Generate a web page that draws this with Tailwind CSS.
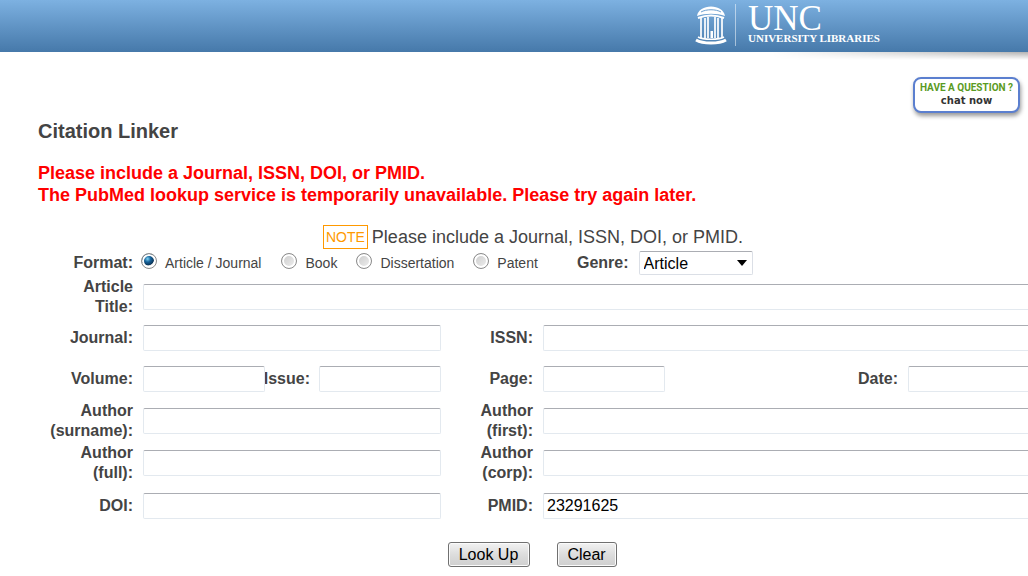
<!DOCTYPE html>
<html lang="en">
<head>
    <meta charset="UTF-8">
    <title>Citation Linker</title>
    <script src="https://cdn.jsdelivr.net/npm/@tailwindcss/browser@4"></script>
</head>
<body class="bg-white text-[#444444] font-['Liberation_Sans',Arial,sans-serif] overflow-x-hidden">
    <header class="h-13 bg-linear-to-b from-[#7db1e1] to-[#4679aa]">
        <a href="#" class="flex justify-end pr-36 pt-1 text-white">
            <svg class="w-8 h-10 mt-px mr-2" viewBox="0 0 32 40" fill="none" stroke="white">
                <path d="M2 11C3 5 9 1.500 16 1.500s13 3.500 14 9.500c-8-3-20-3-28 0z" fill="white" stroke="none"/>
                <path d="M6 7c5-3 15-3 20 0" stroke="#6c9fcf"/>
                <path d="M3 13c8-3 18-3 26 0" stroke-width="2"/>
                <path d="M6 13v20M10 13v20M13 12v21M20 12v21M23 13v20M27 13v20" stroke-width="1.700"/>
                <path d="M15.500 26h2.500v7h-2.500z" fill="white" stroke="none"/>
                <path d="M3 32c5 3 21 3 26 0" stroke-width="1.500"/>
                <path d="M1 35c7 4 23 4 30 0" stroke-width="3"/>
            </svg>
            <span class="border-l border-white/50 h-[42px] pl-3 w-[149px] font-['Liberation_Serif',serif]">
                <span class="block text-[35px] leading-[29px]">UNC</span>
                <span class="block text-[11px] leading-[10px] font-bold whitespace-nowrap">UNIVERSITY LIBRARIES</span>
            </span>
        </a>
    </header>
    <div class="h-2 ml-[75%] bg-linear-to-b from-black/30 to-transparent mask-l-from-0%"></div>

    <main class="pl-[38px]">
        <div class="flex justify-end pr-2 pt-[17px]">
            <button class="w-[107px] h-9 rounded-lg border-2 border-[#5b7fcf] bg-white shadow-[1px_3px_4px_rgba(0,0,0,0.4)] flex flex-col items-center justify-center whitespace-nowrap">
                <span class="text-[10px] leading-[12px] font-bold text-[#5a9a22] font-['Roboto',sans-serif]">HAVE A QUESTION ?</span>
                <span class="text-[10px] leading-[14px] font-bold text-[#333333] font-['DejaVu_Sans',sans-serif]">chat now</span>
            </button>
        </div>

        <h1 class="text-xl leading-6 font-bold mt-1.5">Citation Linker</h1>
        <p class="text-lg leading-[22px] font-bold text-[#ff0000] mt-[19px]">
            Please include a Journal, ISSN, DOI, or PMID.<br>
            The PubMed lookup service is temporarily unavailable. Please try again later.
        </p>

        <form class="mt-[19px]">
            <p class="flex justify-center items-center gap-1 text-lg leading-6">
                <span class="border border-[#ff9900] text-[#ff9900] text-sm leading-[22px] px-[2px]">NOTE</span>
                Please include a Journal, ISSN, DOI, or PMID.
            </p>

            <div class="flex items-center h-[27px]">
                <span class="w-[95px] shrink-0 text-right font-bold">Format:</span>
                <div class="flex ml-2 w-[428px] text-sm">
                    <label class="flex items-center gap-2 mr-5">
                        <input type="radio" name="format" checked class="appearance-none size-4 mb-1 rounded-full border border-[#8c8c8c] shadow-[inset_0_0_0_2px_white] bg-[#e4e4e4] checked:bg-[radial-gradient(circle_at_40%_35%,#7fd4f5_0,#17639b_25%,#0b3558_50%,#e8e8e8_56%)]">
                        Article / Journal
                    </label>
                    <label class="flex items-center gap-2 mr-[19px]">
                        <input type="radio" name="format" class="appearance-none size-4 mb-1 rounded-full border border-[#8c8c8c] shadow-[inset_0_0_0_2px_white] bg-linear-to-br from-[#c9c9c9] to-[#f2f2f2] checked:bg-[#17639b]">
                        Book
                    </label>
                    <label class="flex items-center gap-2 mr-[19px]">
                        <input type="radio" name="format" class="appearance-none size-4 mb-1 rounded-full border border-[#8c8c8c] shadow-[inset_0_0_0_2px_white] bg-linear-to-br from-[#c9c9c9] to-[#f2f2f2] checked:bg-[#17639b]">
                        Dissertation
                    </label>
                    <label class="flex items-center gap-2">
                        <input type="radio" name="format" class="appearance-none size-4 mb-1 rounded-full border border-[#8c8c8c] shadow-[inset_0_0_0_2px_white] bg-linear-to-br from-[#c9c9c9] to-[#f2f2f2] checked:bg-[#17639b]">
                        Patent
                    </label>
                </div>
                <label for="genre" class="font-bold ml-2">Genre:</label>
                <div class="relative ml-[10px]">
                    <select id="genre" class="appearance-none block w-[114px] h-6 pl-1 text-black bg-white border border-[#dbdfe6] border-t-[#abadb3] rounded-xs">
                        <option>Article</option>
                        <option>Journal</option>
                    </select>
                    <svg class="absolute right-[6px] top-[9px] w-[10px] h-[6px] pointer-events-none" viewBox="0 0 10 6"><path d="M0 0h10L5 6z"/></svg>
                </div>
            </div>

            <div class="flex items-center h-[41px]">
                <label for="title" class="w-[95px] shrink-0 text-right font-bold leading-5">Article<br>Title:</label>
                <input id="title" type="text" class="ml-[10px] flex-1 min-w-0 h-[26px] px-[3px] text-black border border-[#e3e9ef] border-t-[#abadb3] border-r-0 rounded-l-xs">
            </div>

            <div class="flex items-center h-[41px]">
                <label for="journal" class="w-[95px] shrink-0 text-right font-bold leading-5">Journal:</label>
                <input id="journal" type="text" class="ml-[10px] w-[298px] h-[26px] px-[3px] text-black border border-[#e3e9ef] border-t-[#abadb3] rounded-xs">
                <label for="issn" class="w-[92px] shrink-0 text-right font-bold leading-5">ISSN:</label>
                <input id="issn" type="text" class="ml-[10px] flex-1 min-w-0 h-[26px] px-[3px] text-black border border-[#e3e9ef] border-t-[#abadb3] border-r-0 rounded-l-xs">
            </div>

            <div class="flex items-center h-[42px]">
                <label for="volume" class="w-[95px] shrink-0 text-right font-bold leading-5">Volume:</label>
                <input id="volume" type="text" class="relative z-10 bg-white ml-[10px] w-[122px] h-[26px] px-[3px] text-black border border-[#e3e9ef] border-t-[#abadb3] rounded-xs">
                <label for="issue" class="flex justify-end w-[45px] shrink-0 font-bold leading-5">Issue:</label>
                <input id="issue" type="text" class="ml-[9px] w-[122px] h-[26px] px-[3px] text-black border border-[#e3e9ef] border-t-[#abadb3] rounded-xs">
                <label for="page" class="w-[92px] shrink-0 text-right font-bold leading-5">Page:</label>
                <input id="page" type="text" class="ml-[10px] w-[122px] h-[26px] px-[3px] text-black border border-[#e3e9ef] border-t-[#abadb3] rounded-xs">
                <label for="date" class="ml-auto font-bold leading-5">Date:</label>
                <input id="date" type="text" class="ml-[10px] w-[120px] h-[26px] px-[3px] text-black border border-[#e3e9ef] border-t-[#abadb3] border-r-0 rounded-l-xs">
            </div>

            <div class="flex items-center h-[42px]">
                <label for="surname" class="w-[95px] shrink-0 text-right font-bold leading-5">Author<br>(surname):</label>
                <input id="surname" type="text" class="ml-[10px] w-[298px] h-[26px] px-[3px] text-black border border-[#e3e9ef] border-t-[#abadb3] rounded-xs">
                <label for="first" class="w-[92px] shrink-0 text-right font-bold leading-5">Author<br>(first):</label>
                <input id="first" type="text" class="ml-[10px] flex-1 min-w-0 h-[26px] px-[3px] text-black border border-[#e3e9ef] border-t-[#abadb3] border-r-0 rounded-l-xs">
            </div>

            <div class="flex items-center h-[42px]">
                <label for="full" class="w-[95px] shrink-0 text-right font-bold leading-5">Author<br>(full):</label>
                <input id="full" type="text" class="ml-[10px] w-[298px] h-[26px] px-[3px] text-black border border-[#e3e9ef] border-t-[#abadb3] rounded-xs">
                <label for="corp" class="w-[92px] shrink-0 text-right font-bold leading-5">Author<br>(corp):</label>
                <input id="corp" type="text" class="ml-[10px] flex-1 min-w-0 h-[26px] px-[3px] text-black border border-[#e3e9ef] border-t-[#abadb3] border-r-0 rounded-l-xs">
            </div>

            <div class="flex items-center h-11">
                <label for="doi" class="w-[95px] shrink-0 text-right font-bold leading-5">DOI:</label>
                <input id="doi" type="text" class="ml-[10px] w-[298px] h-[26px] px-[3px] text-black border border-[#e3e9ef] border-t-[#abadb3] rounded-xs">
                <label for="pmid" class="w-[92px] shrink-0 text-right font-bold leading-5">PMID:</label>
                <input id="pmid" type="text" value="23291625" class="ml-[10px] flex-1 min-w-0 h-[26px] px-[3px] text-black border border-[#e3e9ef] border-t-[#abadb3] border-r-0 rounded-l-xs">
            </div>

            <div class="flex justify-center gap-[27px] mt-3.5 pr-0.5">
                <button type="submit" class="w-[82px] h-[25px] leading-5 text-black border border-[#707070] rounded-[3px] bg-linear-to-b from-[#f2f2f2] from-0% via-[#dddddd] via-50% to-[#cfcfcf] shadow-[inset_0_0_0_1px_#fbfbfb]">Look Up</button>
                <button type="reset" class="w-[60px] h-[25px] leading-5 text-black border border-[#707070] rounded-[3px] bg-linear-to-b from-[#f2f2f2] from-0% via-[#dddddd] via-50% to-[#cfcfcf] shadow-[inset_0_0_0_1px_#fbfbfb]">Clear</button>
            </div>
        </form>
    </main>
</body>
</html>
